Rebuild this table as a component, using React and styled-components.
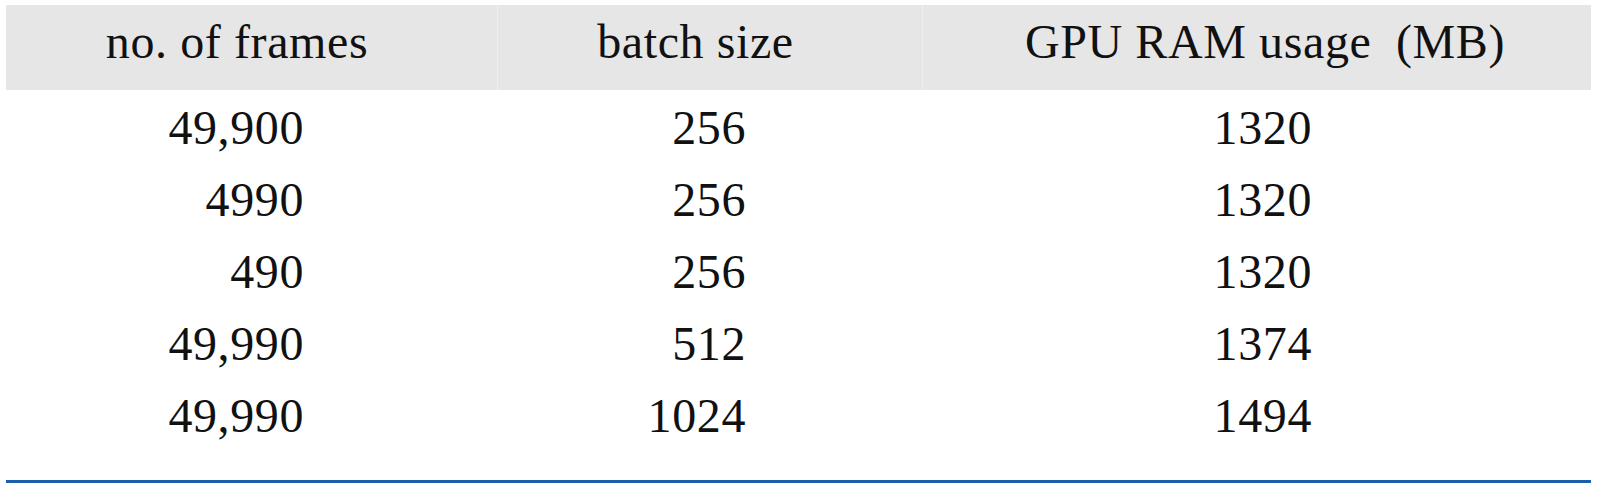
import React from "react";
import styled, { createGlobalStyle } from "styled-components";

const GlobalStyle = createGlobalStyle`
  html, body {
    margin: 0;
    padding: 0;
    background: #ffffff;
  }
  body {
    font-family: "Liberation Serif", "Times New Roman", serif;
    color: #111111;
  }
`;

const Page = styled.div`
  padding: 5px 6px 0 6px;
  width: 1597px;
  box-sizing: border-box;
`;

const Table = styled.div`
  display: grid;
  grid-template-columns: 491px 425px 1fr;
  width: 1585px;
  border-bottom: 3px solid #1d5ea8;
  padding-bottom: 29px;
`;

const HeadCell = styled.div`
  height: 85px;
  background: #e6e6e6;
  display: flex;
  align-items: center;
  justify-content: center;
  box-sizing: border-box;
  padding-bottom: 12px;
  padding-left: ${(p) => Math.max(0, p.$offset)}px;
  padding-right: ${(p) => Math.max(0, -p.$offset)}px;
  border-left: ${(p) => (p.$divider ? "1px solid #efefef" : "none")};
  font-size: 48px;
  letter-spacing: 0.6px;
  white-space: nowrap;
`;

const Cell = styled.div`
  height: ${(p) => (p.$first ? 73 : 72)}px;
  display: flex;
  align-items: center;
  justify-content: flex-end;
  box-sizing: border-box;
  padding-right: ${(p) => p.$pad}px;
  padding-top: ${(p) => (p.$first ? 2 : 0)}px;
  font-size: 48px;
  letter-spacing: 0.6px;
  white-space: nowrap;
`;

const columns = [
  { label: "no. of frames", offset: -29, pad: 193 },
  { label: "batch size", offset: -29, pad: 176 },
  { label: "GPU RAM usage\u2002(MB)", offset: 16, pad: 279 },
];

const rows = [
  ["49,900", "256", "1320"],
  ["4990", "256", "1320"],
  ["490", "256", "1320"],
  ["49,990", "512", "1374"],
  ["49,990", "1024", "1494"],
];

export default function App() {
  return (
    <>
      <GlobalStyle />
      <Page>
        <Table>
          {columns.map((c, i) => (
            <HeadCell key={c.label} $offset={c.offset} $divider={i > 0}>
              {c.label}
            </HeadCell>
          ))}
          {rows.map((r, ri) =>
            r.map((v, ci) => (
              <Cell key={`${ri}-${ci}`} $pad={columns[ci].pad} $first={ri === 0}>
                {v}
              </Cell>
            ))
          )}
        </Table>
      </Page>
    </>
  );
}
